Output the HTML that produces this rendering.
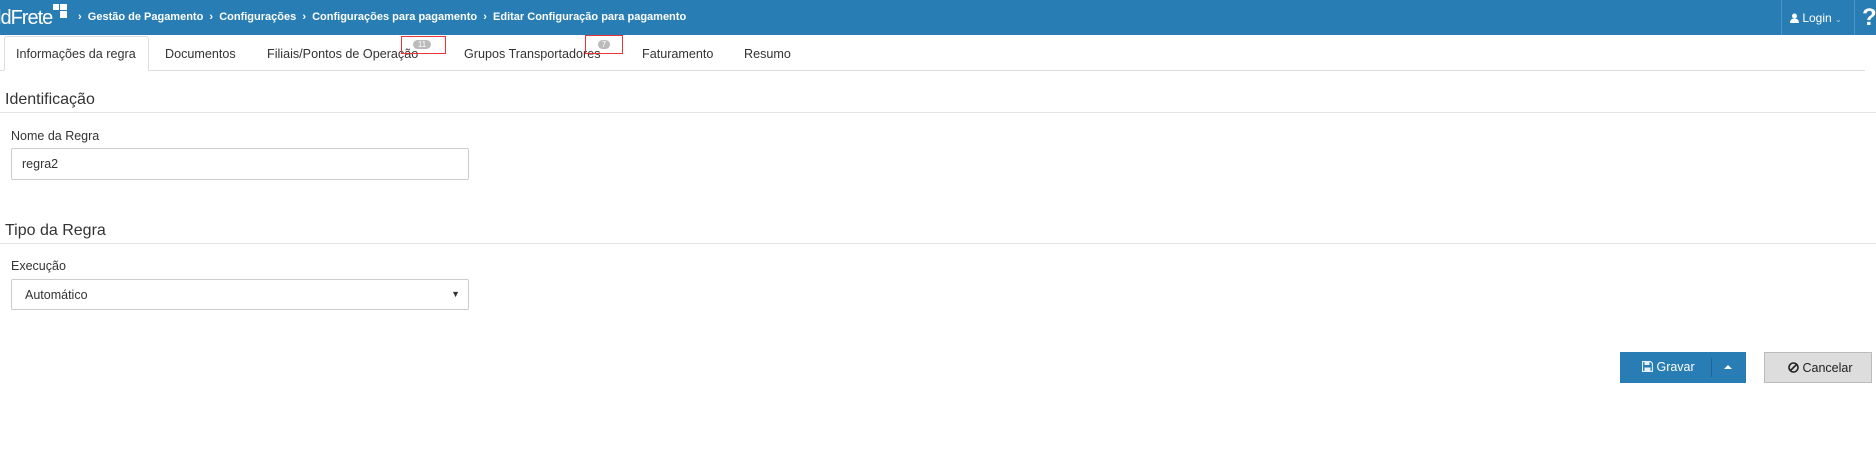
<!DOCTYPE html>
<html><head><meta charset="utf-8"><style>
*{box-sizing:border-box;margin:0;padding:0}
body{width:1876px;height:452px;background:#fff;font-family:"Liberation Sans",sans-serif;color:#333;position:relative;overflow:hidden}
.hdr{position:absolute;left:0;top:0;width:1876px;height:35px;background:#287db4;color:#fff}
.logo{position:absolute;left:-3px;top:7px;font-size:20px;letter-spacing:-1px}
.sq{position:absolute;background:#fff}
.bc{position:absolute;left:78px;top:11px;font-size:11px;font-weight:bold;white-space:nowrap}
.sep{position:absolute;top:0;width:1px;height:35px;background:#4c96c6}
.login{position:absolute;left:1790px;top:11px;font-size:12px}
.q{position:absolute;left:1862px;top:4px;font-size:24px;font-weight:bold}
.tabline{position:absolute;left:0;top:70px;width:1865px;height:1px;background:#ddd}
.tab{position:absolute;top:47px;font-size:12.6px;color:#333;white-space:nowrap}
.act{position:absolute;left:4px;top:36px;width:145px;height:35px;border:1px solid #ddd;border-bottom:1px solid #fff;border-radius:3px 3px 0 0;background:#fff}
.badge{position:absolute;top:40px;height:9px;border-radius:5px;background:#bbb;color:#fff;font-size:8px;line-height:9px;text-align:center}
.red{position:absolute;border:1px solid #e33}
h3{position:absolute;left:5px;font-size:16px;font-weight:normal;color:#333}
.hl{position:absolute;left:0;width:1876px;height:1px;background:#e3e3e3}
.lbl{position:absolute;left:11px;font-size:12.5px;color:#333}
.inp{position:absolute;left:11px;width:458px;height:32px;border:1px solid #ccc;border-radius:2px;font-size:12.5px;padding:8px 10px}
.btn{position:absolute;top:352px;height:31px;font-size:12.5px}
</style></head><body>
<div class="hdr">
<div class="logo">ldFrete</div>
<div class="sq" style="left:53px;top:4px;width:6px;height:6px"></div>
<div class="sq" style="left:60px;top:4px;width:7px;height:6px"></div>
<div class="sq" style="left:60px;top:11px;width:7px;height:7px"></div>
<div class="bc">›&nbsp; Gestão de Pagamento &nbsp;›&nbsp; Configurações &nbsp;›&nbsp; Configurações para pagamento &nbsp;›&nbsp; Editar Configuração para pagamento</div>
<div class="sep" style="left:1781px"></div>
<div class="sep" style="left:1854px"></div>
<div class="login"><svg width="9" height="10" viewBox="0 0 9 10" style="vertical-align:-1px"><circle cx="4.5" cy="3" r="2.5" fill="#fff"/><path d="M0 10 Q0 5.5 4.5 5.5 Q9 5.5 9 10Z" fill="#fff"/></svg> Login <span style="font-size:8px;color:#bcd">&#8964;</span></div>
<div class="q">?</div>
</div>
<div class="tabline"></div>
<div class="act"></div>
<div class="tab" style="left:16px">Informações da regra</div>
<div class="tab" style="left:165px">Documentos</div>
<div class="tab" style="left:267px">Filiais/Pontos de Operação</div>
<div class="tab" style="left:464px">Grupos Transportadores</div>
<div class="tab" style="left:642px">Faturamento</div>
<div class="tab" style="left:744px">Resumo</div>
<div class="badge" style="left:413px;width:18px">11</div>
<div class="badge" style="left:598px;width:12px">7</div>
<div class="red" style="left:401px;top:36px;width:45px;height:18px"></div>
<div class="red" style="left:585px;top:35px;width:38px;height:19px"></div>
<h3 style="top:91px">Identificação</h3>
<div class="hl" style="top:112px"></div>
<div class="lbl" style="top:129px">Nome da Regra</div>
<div class="inp" style="top:148px">regra2</div>
<h3 style="top:222px">Tipo da Regra</h3>
<div class="hl" style="top:243px"></div>
<div class="lbl" style="top:259px">Execução</div>
<div class="inp" style="top:279px;height:31px;padding-left:13px">Automático<span style="position:absolute;right:8px;top:9px;font-size:9px">▼</span></div>
<div class="btn" style="left:1620px;width:126px;background:#287db4;color:#fff">
<div style="position:absolute;left:22px;top:8px"><svg width="11" height="11" viewBox="0 0 11 11" style="vertical-align:-1px"><path d="M0.5 0.5H8.5L10.5 2.5V10.5H0.5Z" fill="none" stroke="#e6f0f8" stroke-width="1.2"/><rect x="2.5" y="1" width="5" height="3" fill="#e6f0f8"/><rect x="2.5" y="6.5" width="6" height="3.5" fill="#e6f0f8"/></svg> Gravar</div>
<div style="position:absolute;left:91px;top:6px;width:1px;height:19px;background:#1f6797"></div>
<div style="position:absolute;left:104px;top:13px;width:0;height:0;border-left:4px solid transparent;border-right:4px solid transparent;border-bottom:4px solid #fff"></div>
</div>
<div class="btn" style="left:1764px;width:108px;background:#ddd;border:1px solid #bbb;color:#222;padding:8px 0 0 23px">
<svg width="11" height="11" viewBox="0 0 11 11" style="vertical-align:-1px"><circle cx="5.5" cy="5.5" r="4.5" fill="none" stroke="#222" stroke-width="1.6"/><path d="M2.5 8.5L8.5 2.5" stroke="#222" stroke-width="1.6"/></svg> Cancelar</div>
</body></html>
